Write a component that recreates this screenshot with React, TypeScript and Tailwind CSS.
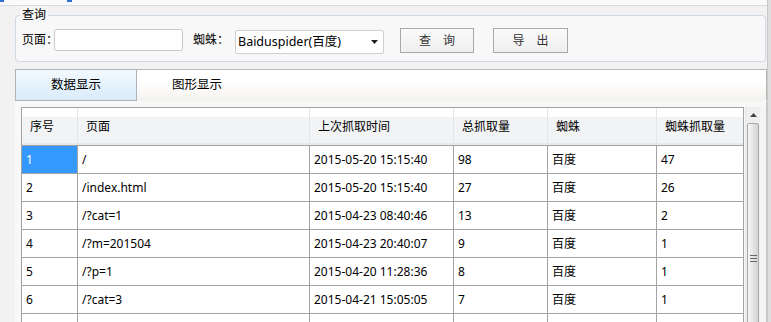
import React from "react";

const rows = [
  ["1", "/", "2015-05-20 15:15:40", "98", "百度", "47"],
  ["2", "/index.html", "2015-05-20 15:15:40", "27", "百度", "26"],
  ["3", "/?cat=1", "2015-04-23 08:40:46", "13", "百度", "2"],
  ["4", "/?m=201504", "2015-04-23 20:40:07", "9", "百度", "1"],
  ["5", "/?p=1", "2015-04-20 11:28:36", "8", "百度", "1"],
  ["6", "/?cat=3", "2015-04-21 15:05:05", "7", "百度", "1"],
  ["", "", "", "", "", ""],
];

const headers = ["序号", "页面", "上次抓取时间", "总抓取量", "蜘蛛", "蜘蛛抓取量"];
const widths = ["w-[56px]", "w-[232px]", "w-[144px]", "w-[94px]", "w-[109px]", "w-[87px]"];

export default function App() {
  return (
    <div className="w-[771px] h-[322px] overflow-hidden flex bg-[#f2f2f2] text-[12px] text-black font-['Noto_Sans','Noto_Sans_CJK_SC',sans-serif]">
      <div className="w-[767px] flex flex-col">
        {/* top strip */}
        <div className="h-[6px] shrink-0 border-b border-[#d3dce5] bg-[#fafafa] flex">
          <div className="w-[4px] h-[2px] bg-[#2f6fd6]" />
          <div className="ml-[63px] w-[5px] h-[2px] bg-[#2f6fd6]" />
        </div>

        {/* query group */}
        <div className="relative ml-[15px] mr-[1px] mt-[9px] h-[47px] shrink-0 border border-[#cfd9e3] rounded-[4px] bg-[#f8f8f8] flex items-start pl-[6px]">
          <span className="absolute left-[4px] top-[-9px] px-[2px] bg-[#f6f6f6] leading-[16px]">查询</span>
          <span className="w-[32px] mt-[16px] leading-[16px] whitespace-nowrap">页面：</span>
          <div className="w-[129px] h-[22px] mt-[13px] bg-white border border-[#c9c9c9] rounded-[2px]" />
          <span className="w-[42px] ml-[10px] mt-[16px] leading-[16px] whitespace-nowrap">蜘蛛：</span>
          <div className="w-[149px] h-[24px] mt-[14px] bg-white border border-[#cfcfcf] rounded-[2px] flex items-center pl-[2px] pr-[5px]">
            <span className="flex-1 text-[12.5px]">Baiduspider(百度)</span>
            <svg width="7" height="4" viewBox="0 0 7 4">
              <path d="M0 0h7L3.5 4z" fill="#222" />
            </svg>
          </div>
          <button className="w-[74px] h-[25px] ml-[16px] mt-[12px] border border-[#a9a9a9] bg-linear-to-b from-[#fafafa] to-[#efefef] text-[#333] flex items-center justify-center">
            查　询
          </button>
          <button className="w-[75px] h-[25px] ml-[19px] mt-[12px] border border-[#a9a9a9] bg-linear-to-b from-[#fafafa] to-[#efefef] text-[#333] flex items-center justify-center">
            导　出
          </button>
        </div>

        {/* tabs */}
        <div className="ml-[15px] mt-[7px] h-[32px] shrink-0 flex">
          <div className="w-[122px] h-[32px] border border-[#acb4bb] bg-linear-to-b from-[#f3f9fe] to-[#d9ebf9] flex items-center justify-center text-[12.5px]">
            数据显示
          </div>
          <div className="flex-1 h-[31px] border-t border-r border-[#b8b8b8] bg-linear-to-b from-white from-40% to-[#f6f3ef] flex">
            <span className="w-[120px] flex items-center justify-center text-[12.5px]">图形显示</span>
          </div>
        </div>

        {/* content pane */}
        <div className="ml-[15px] flex-1 bg-[#f8f8f8] border-r border-[#c8c8c8] flex pl-[6px] pt-[6px]">
          <div className="w-[723px] border-l border-t border-[#a3a3a3] flex flex-col">
            <div className="h-[38px] shrink-0 flex border-b border-[#a3a3a3] bg-linear-to-b from-white from-25% to-[#f2f3f5] to-25%">
              {headers.map((h, i) => (
                <div
                  key={h}
                  className={`${widths[i]} ${i === 5 ? "border-r border-[#a3a3a3]" : "border-r border-[#e3e5e8]"} flex items-center pl-[8px] shadow-[inset_0_-2px_0_#e6e8eb]`}
                >
                  {h}
                </div>
              ))}
            </div>
            {rows.map((r, ri) => (
              <div key={ri} className="h-[28px] shrink-0 flex border-b border-[#a3a3a3] bg-white">
                {r.map((c, ci) => (
                  <div
                    key={ci}
                    className={`${widths[ci]} border-r border-[#a3a3a3] flex items-center pl-[4px] ${
                      ri === 0 && ci === 0 ? "bg-[#3399ff] text-white" : ""
                    }`}
                  >
                    {c}
                  </div>
                ))}
              </div>
            ))}
          </div>

          {/* scrollbar */}
          <div className="w-[16px] ml-[1px] border-l border-[#e8e8e8] bg-[#efefef] flex flex-col">
            <div className="h-[16px] flex items-center justify-center">
              <svg width="7" height="4" viewBox="0 0 7 4">
                <path d="M3.5 0L7 4H0z" fill="#444" />
              </svg>
            </div>
            <div className="flex-1 mx-[1px] border border-[#a8a8a8] rounded-[2px] bg-linear-to-r from-[#f7f7f7] to-[#d3d3d3] flex flex-col items-center pt-[131px]">
              <div className="w-[7px] h-[1px] bg-[#666]" />
              <div className="w-[7px] h-[1px] bg-[#666] mt-[2px]" />
              <div className="w-[7px] h-[1px] bg-[#666] mt-[2px]" />
            </div>
          </div>
          <div className="w-[6px] bg-[#f4f4f4]" />
        </div>
      </div>
      <div className="w-[4px] bg-[#dedede] border-l border-[#c8c8c8]" />
    </div>
  );
}
